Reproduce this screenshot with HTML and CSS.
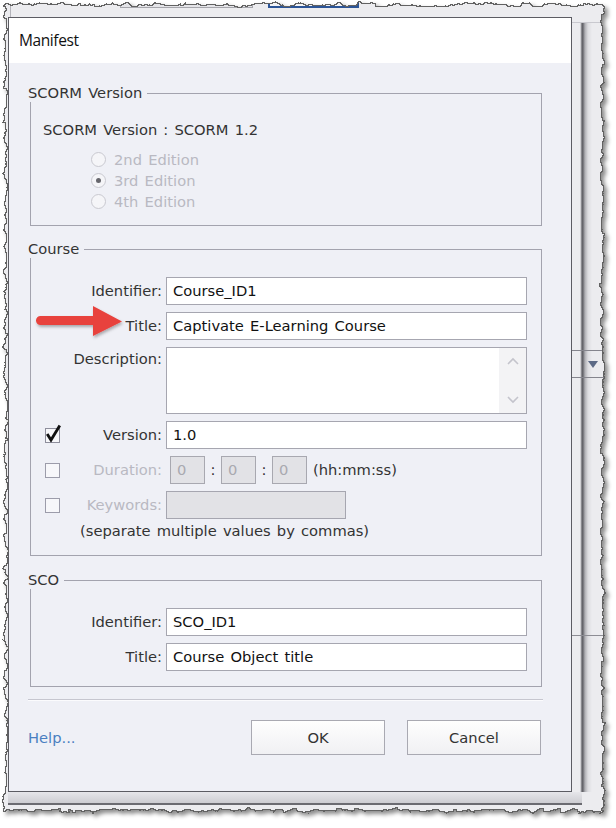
FILE: index.html
```html
<!DOCTYPE html>
<html lang="en">
<head>
    <meta charset="UTF-8">
    <meta name="viewport" content="width=device-width, initial-scale=1.0">
    <title>Manifest</title>
    <link rel="stylesheet" href="styles.css">
</head>
<body>

<div class="shot">

    <!-- window behind the dialog -->
    <div class="topbar">
        <div class="tab"></div>
        <div class="tab tab-active"></div>
    </div>

    <div class="workspace">
        <div class="dialog">
            <div class="dialog-title">Manifest</div>

            <div class="dialog-body">

                <fieldset class="group">
                    <legend>SCORM Version</legend>
                    <div class="scorm-line">SCORM Version : SCORM 1.2</div>
                    <div class="radios">
                        <div class="radio"><span class="dot"></span>2nd Edition</div>
                        <div class="radio"><span class="dot checked"></span>3rd Edition</div>
                        <div class="radio"><span class="dot"></span>4th Edition</div>
                    </div>
                </fieldset>

                <fieldset class="group group-course">
                    <legend>Course</legend>

                    <div class="row">
                        <span class="chk"></span>
                        <span class="lbl">Identifier:</span>
                        <div class="field">Course_ID1</div>
                    </div>

                    <div class="row">
                        <span class="chk"></span>
                        <span class="lbl">Title:</span>
                        <div class="field">Captivate E-Learning Course</div>
                    </div>

                    <div class="row row-top">
                        <span class="chk"></span>
                        <span class="lbl">Description:</span>
                        <div class="area">
                            <div class="scroll">
                                <svg width="12" height="8" viewBox="0 0 12 8"><path d="M1 7 L6 2 L11 7" fill="none" stroke="#c4c4cc" stroke-width="1.6"/></svg>
                                <svg width="12" height="8" viewBox="0 0 12 8"><path d="M1 1 L6 6 L11 1" fill="none" stroke="#c4c4cc" stroke-width="1.6"/></svg>
                            </div>
                        </div>
                    </div>

                    <div class="row">
                        <span class="chk">
                            <svg class="check" width="15" height="15" viewBox="0 0 15 15">
                                <rect x="0.5" y="0.5" width="14" height="14" fill="#f7f7fa" stroke="#8e8e9c"/>
                                <path d="M2.2 6 L6 12 L14.8 -2.5" fill="none" stroke="#111" stroke-width="2.8"/>
                            </svg>
                        </span>
                        <span class="lbl">Version:</span>
                        <div class="field">1.0</div>
                    </div>

                    <div class="row">
                        <span class="chk"><span class="box"></span></span>
                        <span class="lbl off">Duration:</span>
                        <div class="tbox first">0</div>
                        <span class="colon">:</span>
                        <div class="tbox">0</div>
                        <span class="colon">:</span>
                        <div class="tbox">0</div>
                        <span class="hint">(hh:mm:ss)</span>
                    </div>

                    <div class="row row-keys">
                        <span class="chk"><span class="box"></span></span>
                        <span class="lbl off">Keywords:</span>
                        <div class="field field-off"></div>
                    </div>

                    <div class="note">(separate multiple values by commas)</div>
                </fieldset>

                <fieldset class="group group-sco">
                    <legend>SCO</legend>

                    <div class="row">
                        <span class="chk"></span>
                        <span class="lbl">Identifier:</span>
                        <div class="field">SCO_ID1</div>
                    </div>

                    <div class="row row-last">
                        <span class="chk"></span>
                        <span class="lbl">Title:</span>
                        <div class="field">Course Object title</div>
                    </div>
                </fieldset>

                <div class="sep"></div>

                <div class="footer">
                    <a class="help" href="#">Help...</a>
                    <button type="button" class="btn">OK</button>
                    <button type="button" class="btn">Cancel</button>
                </div>

            </div>
        </div>

        <div class="side">
            <div class="rail">
                <div class="combo"><span class="caret"></span></div>
                <div class="rail-line"></div>
            </div>
        </div>
    </div>

    <div class="bottom"></div>

    <!-- callout arrow drawn on the screenshot -->
    <svg class="arrow" width="100" height="45" viewBox="0 0 100 45">
        <defs>
            <filter id="arrowShadow" x="-10%" y="-20%" width="130%" height="160%">
                <feDropShadow dx="1" dy="2" stdDeviation="1.5" flood-color="#000" flood-opacity="0.3"/>
            </filter>
        </defs>
        <path d="M10.5 16 H63 V6 L92 21.5 L63 36 V25 H10.5 A4.5 4.5 0 0 1 10.5 16 Z" fill="#e8423d" filter="url(#arrowShadow)"/>
    </svg>

    <!-- torn paper edge with its shadow -->
    <svg class="torn" width="616" height="828" viewBox="0 0 616 828">
        <defs>
            <filter id="tornEdge" filterUnits="userSpaceOnUse" x="-20" y="-20" width="656" height="868" color-interpolation-filters="sRGB">
                <feTurbulence type="fractalNoise" baseFrequency="0.11" numOctaves="4" seed="11" result="noise"/>
                <feDisplacementMap in="SourceGraphic" in2="noise" scale="9" xChannelSelector="R" yChannelSelector="G" result="frame"/>
                <feMorphology in="frame" operator="dilate" radius="1" result="grown"/>
                <feComposite in="grown" in2="frame" operator="out" result="ring"/>
                <feFlood flood-color="#626262"/>
                <feComposite in2="ring" operator="in" result="line"/>
                <feComponentTransfer in="frame" result="hole">
                    <feFuncA type="table" tableValues="1 0"/>
                </feComponentTransfer>
                <feOffset in="hole" dx="3" dy="3"/>
                <feGaussianBlur stdDeviation="2.2"/>
                <feComposite in2="frame" operator="in" result="fall"/>
                <feFlood flood-color="#000" flood-opacity="0.45"/>
                <feComposite in2="fall" operator="in" result="shadow"/>
                <feMerge>
                    <feMergeNode in="frame"/>
                    <feMergeNode in="shadow"/>
                    <feMergeNode in="line"/>
                </feMerge>
            </filter>
        </defs>
        <path d="M-30 -30 H646 V858 H-30 Z M5 4 V811 H603 V4 Z" fill="#fff" fill-rule="evenodd" filter="url(#tornEdge)"/>
    </svg>

</div>

</body>
</html>
```

FILE: styles.css
```css
* {
    box-sizing: border-box;
}

body {
    margin: 0;
    background: #fff;
    font-family: "DejaVu Sans", sans-serif;
    font-size: 14.7px;
    word-spacing: 1.5px;
    color: #333;
}

.shot {
    position: relative;
    width: 616px;
    height: 828px;
    overflow: hidden;
    background: #ececef;
}

/* window behind the dialog */
.topbar {
    height: 17px;
    display: flex;
    align-items: flex-start;
    margin-left: 10px;
    border-left: 1px solid #b4b4ba;
}

.tab {
    width: 133px;
    height: 8px;
    margin-left: 109px;
    border: 1px solid #a6a6ac;
    border-top: none;
    background: #e4e4e8;
}

.tab-active {
    width: 91px;
    margin-left: 15px;
    border: 2px solid #2c5597;
    border-top: none;
    background: #f4f4f6;
}

.workspace {
    display: flex;
    height: 775px;
    padding-left: 8px;
}

.side {
    flex: 1;
    display: flex;
    padding-top: 5px;
}

.rail {
    flex: 1;
    border-top: 1px solid #c9c9cf;
    background: linear-gradient(to right, #ececef 0, #ececef 8px, #b4b4b9 9px, #5e5e64 10px, #6a6a70 11px, #b0b0b5 13px, #dcdce0 16px, #ececef 20px);
}

.combo {
    margin-top: 327px;
    height: 28px;
    border-top: 1px solid #85858d;
    border-bottom: 1px solid #85858d;
    display: flex;
    align-items: center;
    padding-left: 16px;
}

.caret {
    width: 0;
    height: 0;
    border-left: 5px solid transparent;
    border-right: 5px solid transparent;
    border-top: 7px solid #5d6a86;
}

.rail-line {
    margin-top: 257px;
    border-top: 1px solid #8d8d94;
}

.bottom {
    height: 13px;
    width: 574px;
    margin-left: 8px;
    background: linear-gradient(#e6e6ea, #cdcdd2);
    border-bottom: 2px solid #6b6b71;
}

/* dialog */
.dialog {
    width: 564px;
    flex: none;
    display: flex;
    flex-direction: column;
    border: 1px solid #5c5c63;
    background: #eff0f6;
}

.dialog-title {
    height: 45px;
    line-height: 45px;
    padding-left: 10px;
    background: #fff;
    font-family: "Open Sans", sans-serif;
    font-size: 15.5px;
    letter-spacing: -0.4px;
    word-spacing: 0;
    color: #111;
}

.dialog-body {
    flex: 1;
    padding: 21px 28px 0 19px;
}

.group {
    margin: 0 1px 0 2px;
    padding: 19px 14px 13px 12px;
    border: 1px solid #a3a3ae;
    min-width: 0;
}

.group legend {
    margin-left: -15px;
    padding: 0 5px 0 0;
    line-height: 18px;
}

.group-course {
    margin-top: 14px;
    padding-bottom: 15px;
}

.group-sco {
    margin-top: 15px;
    padding-bottom: 15px;
}

.scorm-line {
    line-height: 18px;
}

.radios {
    margin: 10px 0 0 48px;
    color: #b9b9c2;
}

.radio {
    display: flex;
    align-items: center;
    height: 21px;
}

.dot {
    width: 15px;
    height: 15px;
    margin-right: 8px;
    border-radius: 50%;
    border: 1px solid #c9c9d0;
    background: #f5f5f8;
    display: flex;
    align-items: center;
    justify-content: center;
}

.dot.checked::after {
    content: "";
    width: 5px;
    height: 5px;
    border-radius: 50%;
    background: #66666c;
}

/* form rows */
.row {
    display: flex;
    align-items: center;
    margin-bottom: 7px;
    line-height: 18px;
}

.row-top {
    align-items: flex-start;
}

.row-top .lbl {
    margin-top: 3px;
}

.row-keys {
    margin-bottom: 3px;
}

.row-last {
    margin-bottom: 0;
}

.chk {
    width: 17px;
    flex: none;
    display: flex;
    padding-left: 2px;
}

.check {
    overflow: visible;
}

.box {
    width: 15px;
    height: 15px;
    border: 1px solid #9c9caa;
    background: #f7f7fa;
}

.lbl {
    width: 102px;
    flex: none;
    text-align: right;
    margin-right: 4px;
    white-space: nowrap;
}

.lbl.off {
    color: #b9b9c2;
}

.field {
    flex: 1;
    height: 28px;
    line-height: 26px;
    padding-left: 6px;
    border: 1px solid #a6a6b0;
    background: #fff;
    color: #111;
}

.field-off {
    flex: none;
    width: 180px;
    background: #e2e2e6;
}

.area {
    flex: 1;
    height: 67px;
    border: 1px solid #a6a6b0;
    background: #fff;
    display: flex;
    justify-content: flex-end;
}

.scroll {
    width: 27px;
    background: #f3f3f5;
    display: flex;
    flex-direction: column;
    justify-content: space-between;
    align-items: center;
    padding: 9px 0;
}

.tbox {
    width: 35px;
    height: 28px;
    line-height: 26px;
    padding-left: 6px;
    border: 1px solid #a8a8b0;
    background: #e2e2e6;
    color: #a9a9b0;
}

.tbox.first {
    margin-left: 4px;
}

.colon {
    width: 16px;
    text-align: center;
}

.hint {
    margin-left: 6px;
}

.note {
    margin-left: 37px;
    line-height: 18px;
}

.sep {
    margin-top: 12px;
    border-top: 1px solid #c6c6cf;
    border-bottom: 1px solid #fbfbfd;
}

.footer {
    display: flex;
    align-items: center;
    margin-top: 19px;
    padding-right: 2px;
}

.help {
    margin-right: auto;
    color: #4a7fc1;
    text-decoration: none;
}

.btn {
    width: 134px;
    height: 35px;
    border: 1px solid #a9a9b2;
    background: linear-gradient(#fefefe, #f0f0f3);
    font: inherit;
    color: #333;
}

.btn + .btn {
    margin-left: 22px;
}

/* overlays on the screenshot */
.arrow {
    position: absolute;
    left: 30px;
    top: 300px;
}

.torn {
    position: absolute;
    left: 0;
    top: 0;
    pointer-events: none;
}
```
